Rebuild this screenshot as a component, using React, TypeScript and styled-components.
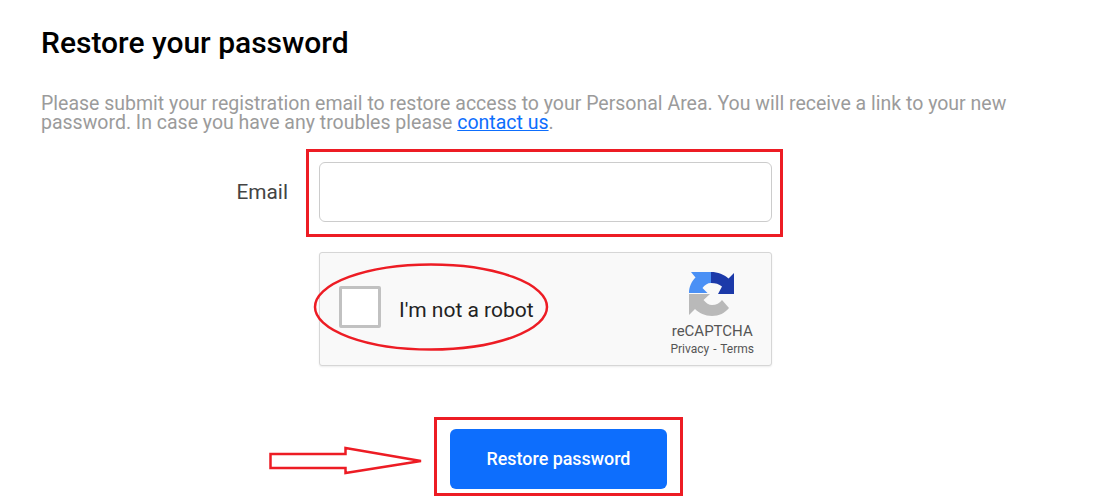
import React from "react";
import styled, { createGlobalStyle } from "styled-components";

const Global = createGlobalStyle`
  html, body { margin: 0; padding: 0; background: #fff; }
  body { font-family: Roboto, "Liberation Sans", sans-serif; }
`;

const Page = styled.main`
  position: relative;
  width: 1108px;
  height: 498px;
  overflow: hidden;
  box-sizing: border-box;
  padding: 25px 41px 0;
  background: #fff;
`;

const Title = styled.h1`
  margin: 0;
  font-size: 30px;
  line-height: 36px;
  font-weight: 500;
  color: #000;
`;

const Lead = styled.p`
  margin: 33px 0 0;
  width: 990px;
  font-size: 19.5px;
  line-height: 19px;
  color: #9b9b9b;
`;

const ContactLink = styled.a`
  color: #0d6efd;
  text-decoration: underline;
`;

const Form = styled.form`
  display: flex;
  flex-direction: column;
  margin-top: 30px;
`;

const Row = styled.div<{ $top?: number }>`
  display: grid;
  grid-template-columns: 247px 453px;
  column-gap: 31px;
  align-items: center;
  margin-top: ${(p) => p.$top ?? 0}px;
`;

const Label = styled.label`
  text-align: right;
  font-size: 20.8px;
  color: #444;
`;

const Input = styled.input`
  box-sizing: border-box;
  height: 60px;
  width: 100%;
  border: 1px solid #ccc;
  border-radius: 6px;
  background: #fff;
  outline: none;
`;

const Captcha = styled.div`
  grid-column: 2;
  box-sizing: border-box;
  height: 114px;
  display: flex;
  align-items: center;
  justify-content: space-between;
  padding: 0 17px 0 19px;
  background: #f9f9f9;
  border: 1px solid #d6d6d6;
  border-radius: 3px;
  box-shadow: 0 1px 2px rgba(0, 0, 0, 0.08);
`;

const CaptchaLeft = styled.div`
  display: flex;
  align-items: center;
  gap: 18px;
  margin-bottom: 5px;
`;

const CheckBox = styled.span`
  box-sizing: border-box;
  display: block;
  width: 42px;
  height: 42px;
  background: #fff;
  border: 3px solid #c1c1c1;
  border-radius: 2px;
`;

const CaptchaText = styled.span`
  font-size: 21px;
  color: #222;
  padding-top: 6px;
`;

const Brand = styled.div`
  display: flex;
  flex-direction: column;
  align-items: center;
  color: #555;
  padding-top: 9px;
`;

const BrandName = styled.span`
  margin-top: 5px;
  font-size: 15px;
  line-height: 19px;
`;

const BrandLinks = styled.span`
  font-size: 12px;
  line-height: 16px;
  word-spacing: 1px;
`;

const ButtonRow = styled.div`
  display: flex;
  margin: 63px 0 0 409px;
`;

const Submit = styled.button`
  width: 217px;
  height: 60px;
  border: 0;
  border-radius: 6px;
  padding: 0 0 2px;
  background: #0d6efd;
  color: #fff;
  font-family: inherit;
  font-size: 17.9px;
  font-weight: 500;
`;

const Annotations = styled.svg`
  position: absolute;
  left: 0;
  top: 0;
  pointer-events: none;
`;

const RecaptchaLogo = () => (
  <svg width="46" height="46" viewBox="0 0 46 46" aria-hidden="true">
    <path fill="#4a90f5" d="M0 22 C0 16 2.500 10.500 6.500 6.500 L2 1 H22 V12 C18.500 12 15.500 14 13.500 17 L18.500 22 Z" />
    <path fill="#1c3aa9" d="M22 1 C29 1 35 3.500 39.500 7.500 L45 2 V23 H29 L33 15.500 C30 13 26.500 12 22 12 Z" />
    <path fill="#b9b9b9" d="M0 23 H21 L14.500 29 C17 32 20 34 23 34 C27 34 31 32 33 29 L40 37 C36 42 30 45 23 45 C16 45 10 42 6 38 L0 44 Z" />
  </svg>
);

export default function App() {
  return (
    <Page>
      <Global />
      <Title>Restore your password</Title>
      <Lead>
        Please submit your registration email to restore access to your Personal Area. You will receive a link to your new
        password. In case you have any troubles please <ContactLink href="#">contact us</ContactLink>.
      </Lead>
      <Form onSubmit={(e) => e.preventDefault()}>
        <Row>
          <Label htmlFor="email">Email</Label>
          <Input id="email" type="email" />
        </Row>
        <Row $top={30}>
          <Captcha>
            <CaptchaLeft>
              <CheckBox />
              <CaptchaText>I'm not a robot</CaptchaText>
            </CaptchaLeft>
            <Brand>
              <RecaptchaLogo />
              <BrandName>reCAPTCHA</BrandName>
              <BrandLinks>Privacy - Terms</BrandLinks>
            </Brand>
          </Captcha>
        </Row>
        <ButtonRow>
          <Submit type="submit">Restore password</Submit>
        </ButtonRow>
      </Form>
      <Annotations width="1108" height="498" viewBox="0 0 1108 498" fill="none" stroke="#ed1c24">
        <rect x="307.500" y="150.500" width="474" height="85" strokeWidth="3" />
        <ellipse cx="431" cy="307" rx="116" ry="42.500" strokeWidth="2.500" />
        <rect x="435.500" y="418.500" width="246" height="76" strokeWidth="3" />
        <path d="M270.500 454 H345.500 V448 L421 461 L345.500 473 V468 H270.500 Z" strokeWidth="2.500" />
      </Annotations>
    </Page>
  );
}
